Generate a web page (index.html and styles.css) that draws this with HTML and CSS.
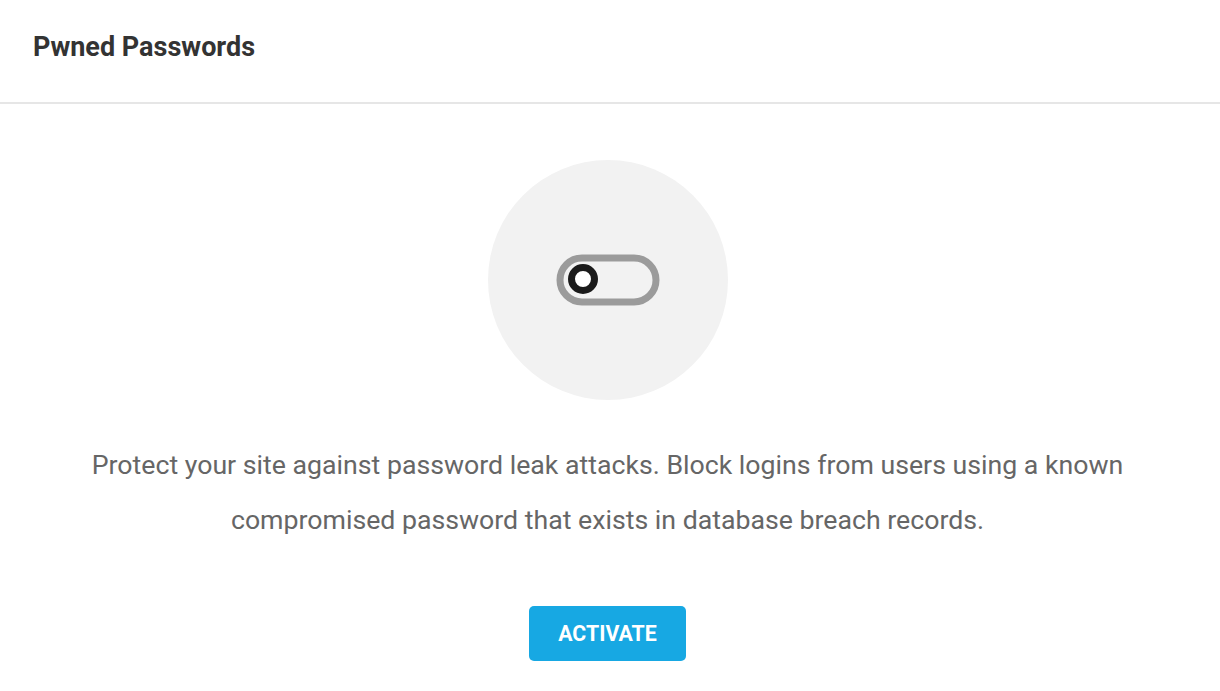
FILE: index.html
```html
<!DOCTYPE html>
<html>
<head>
<meta charset="utf-8">
<link rel="stylesheet" href="styles.css">
</head>
<body>
<div class="box">
  <div class="box-header">
    <h3 class="box-title">Pwned Passwords</h3>
  </div>
  <div class="box-body">
    <div class="illustration">
      <svg width="108" height="56" viewBox="0 0 108 56" aria-hidden="true">
        <rect x="6" y="6" width="96" height="44" rx="22" ry="22" fill="#f2f2f2" stroke="#9b9b9b" stroke-width="7"/>
        <circle cx="29" cy="27" r="11.5" fill="#fff" stroke="#1a1a1a" stroke-width="7"/>
      </svg>
    </div>
    <p class="description">Protect your site against password leak attacks. Block logins from users using a known compromised password that exists in database breach records.</p>
    <button class="btn-activate">ACTIVATE</button>
  </div>
</div>
</body>
</html>
```
FILE: styles.css
```css
html, body {
  margin: 0;
  padding: 0;
  background: #fff;
}
body {
  font-family: Roboto, "Liberation Sans", sans-serif;
  width: 1220px;
  height: 691px;
  overflow: hidden;
}
.box-header {
  height: 102px;
  border-bottom: 2px solid #e6e6e6;
  display: flex;
  align-items: center;
  padding-left: 33px;
  box-sizing: content-box;
}
.box-title {
  margin: 0;
  font-size: 27px;
  font-weight: 700;
  color: #333;
  position: relative;
  top: -4px;
}
.box-body {
  display: flex;
  flex-direction: column;
  align-items: center;
  padding-top: 56px;
  padding-right: 5px;
}
.illustration {
  width: 240px;
  height: 240px;
  border-radius: 50%;
  background: #f2f2f2;
  display: flex;
  align-items: center;
  justify-content: center;
}
.description {
  margin: 38px 0 0;
  max-width: 1120px;
  text-align: center;
  font-size: 26.7px;
  line-height: 55px;
  color: #666;
}
.btn-activate {
  margin-top: 58px;
  width: 157px;
  height: 55px;
  border: none;
  border-radius: 5px;
  background: #17a8e3;
  color: #fff;
  font-family: Roboto, "Liberation Sans", sans-serif;
  font-size: 21.3px;
  font-weight: 700;
  cursor: pointer;
}
```
